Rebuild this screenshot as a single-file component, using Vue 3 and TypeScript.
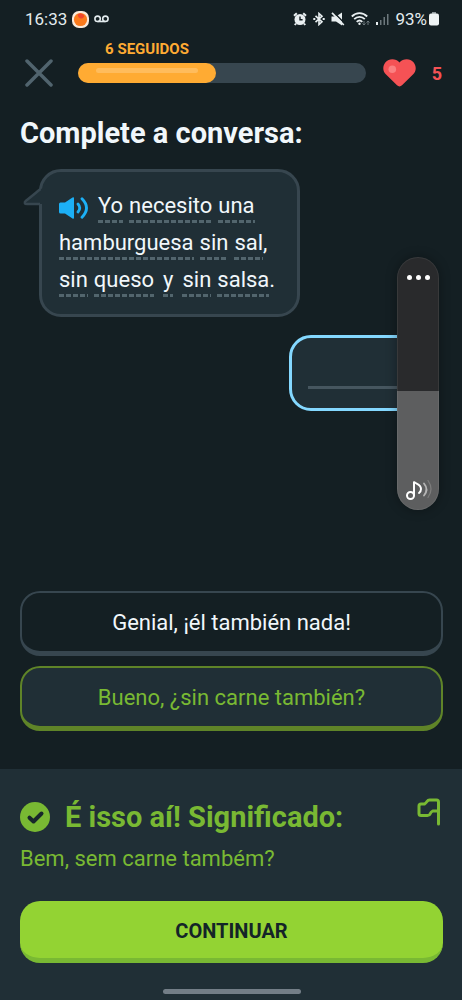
<script setup lang="ts">
import { computed, ref } from 'vue'

interface Token {
  text: string
  tail?: string
  wide?: boolean
}

const lines: Token[][] = [
  [{ text: 'Yo' }, { text: 'necesito' }, { text: 'una' }],
  [{ text: 'hamburguesa' }, { text: 'sin' }, { text: 'sal', tail: ',' }],
  [{ text: 'sin' }, { text: 'queso' }, { text: 'y', wide: true }, { text: 'sin' }, { text: 'salsa', tail: '.' }],
]

const options: string[] = ['Genial, ¡él también nada!', 'Bueno, ¿sin carne también?']
const selected = ref(1)
const progress = ref(48)
const hearts = ref(5)
const volume = ref(47)
const volumeStyle = computed(() => ({ '--level': `${volume.value}%` }))
</script>

<template>
  <div class="screen">
    <div class="status">
      <div class="status-group">
        <span class="clock">16:33</span>
        <svg class="app-dot" width="17" height="17" viewBox="0 0 17 17" aria-hidden="true">
          <rect x="0" y="0" width="17" height="17" rx="7" fill="#fbe9da" />
          <circle cx="8.5" cy="8.5" r="6.6" fill="#fb7a1c" />
          <path d="M6 3.2c2-1.4 5.5-.6 6.300 2-1 2.200-3 3-4.800 1.800C6.200 6.100 5.500 4.600 6 3.200z" fill="#f0452c" />
        </svg>
        <svg width="15" height="8" viewBox="0 0 15 8" fill="none" stroke="#e3ebee" stroke-width="1.600" aria-hidden="true">
          <circle cx="3.600" cy="3.800" r="2.700" />
          <circle cx="11.400" cy="3.800" r="2.700" />
          <path d="M3.600 6.500h7.800" />
        </svg>
      </div>
      <div class="status-group icons">
        <svg width="14" height="14" viewBox="0 0 14 14" aria-hidden="true">
          <circle cx="7" cy="7.500" r="5.500" fill="#e9eff1" />
          <path d="M1 3.800 3.800 1.200M13 3.800 10.200 1.200M3 11.500 1.800 13M11 11.500 12.200 13" stroke="#e9eff1" stroke-width="2" />
          <path d="M7 4.500v3.300h2.600" fill="none" stroke="#141f23" stroke-width="1.400" />
        </svg>
        <svg width="12" height="14" viewBox="0 0 12 14" fill="none" stroke="#e9eff1" stroke-width="1.600" aria-hidden="true">
          <path d="M2.500 3.800 9 9.800 6 12.500v-11L9 4.200 2.500 10.200" />
          <path d="M.3 7h2M9.700 7h2" stroke-width="2" />
        </svg>
        <svg width="14" height="14" viewBox="0 0 14 14" aria-hidden="true">
          <path d="M.5 4.500H5L11 .5v13l-6-4H.5z" fill="#e9eff1" />
          <path d="M2.500 0 14 11.800" stroke="#141f23" stroke-width="1.400" />
          <path d="M1 .8 12.800 13" stroke="#e9eff1" stroke-width="1.700" />
        </svg>
        <svg width="19" height="14" viewBox="0 0 19 14" fill="none" stroke="#e9eff1" stroke-width="1.800" aria-hidden="true">
          <path d="M.8 4.500c4.400-4.400 11-4.400 15.400 0M3.200 7.200c3-3 7.600-3 10.600 0M5.700 9.800c1.700-1.600 4-1.600 5.600 0" />
          <circle cx="8.500" cy="11.800" r="1.200" fill="#e9eff1" stroke="none" />
          <path d="M13 9v4m-1.500-1.500L13 13l1.500-1.500M17 13V9m-1.500 1.500L17 9l1.500 1.500" stroke="#6d787d" stroke-width="1" />
        </svg>
        <svg width="13" height="13" viewBox="0 0 13 13" aria-hidden="true">
          <rect x="0" y="9" width="2" height="3" fill="#e9eff1" />
          <path d="M4 7h1.500v5H4zM7.500 4H9v8H7.500zM11 1h1.500v11H11z" fill="#6d787d" />
        </svg>
        <span class="battery-text">93%</span>
        <svg width="10" height="14" viewBox="0 0 10 14" aria-hidden="true">
          <rect x="3" y="0" width="4" height="3" fill="#8d979b" />
          <rect x="0" y="1.500" width="10" height="12" rx="2" fill="#eef3f4" />
        </svg>
      </div>
    </div>

    <header class="top">
      <button class="close" type="button" aria-label="Fechar">
        <svg width="28" height="28" viewBox="0 0 28 28" aria-hidden="true">
          <path d="M2 2 26 26M26 2 2 26" stroke="#51646e" stroke-width="3.500" stroke-linecap="round" />
        </svg>
      </button>
      <div class="progress">
        <div class="track">
          <div class="fill" :style="{ width: progress + '%' }">
            <span class="streak">6 SEGUIDOS</span>
            <span class="shine"></span>
          </div>
        </div>
      </div>
      <div class="lives">
        <svg width="33" height="28" viewBox="0 0 33 28" aria-hidden="true">
          <path d="M16.500 3.500C13-.7 6-.9 2.500 3.200-.6 7-.4 12 2.800 15.200L14 26.300c1.500 1.500 3.500 1.500 5 0l11.200-11.100c3.200-3.200 3.400-8.200.3-12C27-.9 20-.7 16.500 3.500z" fill="#f55255" />
          <circle cx="9.300" cy="10.300" r="3.800" fill="#fb8081" />
        </svg>
        <span>{{ hearts }}</span>
      </div>
    </header>

    <main class="lesson">
      <h1>Complete a conversa:</h1>

      <div class="bubble">
        <svg class="tail" width="20" height="18" viewBox="0 0 20 18" aria-hidden="true">
          <path d="M20 0 17 1.500Q14 4 3 12.800C1 14.500 1.500 16 4 16H20z" fill="#202f36" />
          <path d="M17.500 1Q14 4 3 12.800C1 14.500 1.500 16 4 16H17" fill="none" stroke="#37464f" stroke-width="2.500" />
        </svg>
        <p v-for="(line, i) in lines" :key="i" class="line">
          <button v-if="i === 0" class="speak" type="button" aria-label="Ouvir">
            <svg width="30" height="24" viewBox="0 0 30 24" aria-hidden="true">
              <path d="M1.500 6.500H6L13.500 1.400Q15 .6 15 2.200V21.800Q15 23.400 13.500 22.600L6 17.500H1.500Q0 17.500 0 16V8Q0 6.500 1.500 6.500z" fill="#1cb0f6" />
              <path d="M19 8Q22.500 12 19 16M23 2.800Q32 12 23 21.200" fill="none" stroke="#1cb0f6" stroke-width="2.800" stroke-linecap="round" />
            </svg>
          </button>
          <span v-for="(t, j) in line" :key="j" class="token" :class="{ wide: t.wide }"><span class="hint">{{ t.text }}</span>{{ t.tail }}</span>
        </p>
      </div>

      <div class="answer"><span class="blank"></span></div>

      <div class="options">
        <button
          v-for="(option, i) in options"
          :key="option"
          type="button"
          class="option"
          :class="{ correct: i === selected }"
          :aria-pressed="i === selected"
          @click="selected = i"
        >
          {{ option }}
        </button>
      </div>
    </main>

    <footer class="result">
      <div class="result-head">
        <svg width="30" height="30" viewBox="0 0 30 30" aria-hidden="true">
          <circle cx="15" cy="15" r="15" fill="#79b933" />
          <path d="m9.500 15.700 4 3.800 8-8" fill="none" stroke="#18272b" stroke-width="4" stroke-linecap="round" stroke-linejoin="round" />
        </svg>
        <h2>É isso aí! Significado:</h2>
        <button class="flag" type="button" aria-label="Denunciar">
          <svg width="24" height="28" viewBox="0 0 24 28" fill="none" stroke="#79b933" stroke-width="3" stroke-linecap="round" stroke-linejoin="round" aria-hidden="true">
            <path d="M21.500 26V4Q21.500 2 19.500 2H12.500Q11 2 10 3.500T7.500 6H4Q2 6 2 8V15.500Q2 17.500 4 17.500H10.500Q12.500 17.500 13.200 15.700T15.700 13H21" />
          </svg>
        </button>
      </div>
      <p class="meaning">Bem, sem carne também?</p>
      <button class="continue" type="button">CONTINUAR</button>
      <div class="home"></div>
    </footer>

    <div class="volume">
      <button class="more" type="button" aria-label="Mais opções"><i></i><i></i><i></i></button>
      <input v-model.number="volume" class="slider" :style="volumeStyle" type="range" min="0" max="100" aria-label="Volume" />
      <svg class="note" width="26" height="22" viewBox="0 0 26 22" fill="none" stroke="#fff" stroke-width="2" stroke-linecap="round" aria-hidden="true">
        <circle cx="4.500" cy="15.500" r="3.500" />
        <path d="M8 15.500V1.500C9 4 15 3.500 15 9q0 2.500-2 4" />
        <path d="M18 3.500q5 6 0 12" stroke="#b5b5b5" stroke-width="1.800" />
        <path d="M22 .5q6 8.500 0 17" stroke="#7c7c7c" stroke-width="1.300" />
      </svg>
    </div>
  </div>
</template>

<style>
body {
  margin: 0;
  background: #141f23;
}
</style>

<style scoped>
.screen {
  position: relative;
  box-sizing: border-box;
  min-height: 100vh;
  display: flex;
  flex-direction: column;
  background: #141f23;
  color: #f1f7fb;
  font-family: Roboto, "Noto Sans", sans-serif;
}

button {
  font: inherit;
  color: inherit;
  background: none;
  border: 0;
  padding: 0;
  cursor: pointer;
}

svg {
  display: block;
  flex: none;
}

.status {
  display: flex;
  justify-content: space-between;
  align-items: center;
  height: 38px;
  padding: 0 23px 0 25px;
  font-size: 17px;
  color: #e3ebee;
}

.status-group {
  display: flex;
  align-items: center;
  gap: 5px;
}

.icons {
  gap: 6px;
}

.battery-text {
  margin-right: -4px;
}

.top {
  display: flex;
  align-items: center;
  margin-top: 16px;
  padding: 0 20px 0 25px;
  height: 38px;
}

.progress {
  flex: 1;
  margin: 0 17px 0 25px;
}

.track {
  height: 20px;
  border-radius: 10px;
  background: #37464f;
}

.fill {
  position: relative;
  height: 20px;
  border-radius: 10px;
  background: #ffab33;
}

.streak {
  position: absolute;
  left: 0;
  right: 0;
  bottom: 25px;
  text-align: center;
  font-size: 15px;
  line-height: 18px;
  font-weight: 700;
  color: #ffab33;
}

.shine {
  position: absolute;
  left: 18px;
  right: 18px;
  top: 5px;
  height: 5px;
  border-radius: 3px;
  background: #ffbc5c;
}

.lives {
  display: flex;
  align-items: center;
  gap: 16px;
  color: #f55255;
  font-size: 18px;
  font-weight: 700;
}

.lesson {
  flex: 1;
  display: flex;
  flex-direction: column;
  padding: 0 19px 38px 20px;
}

h1 {
  margin: 21px 0 0;
  font-size: 29px;
  line-height: 40px;
  font-weight: 700;
}

.bubble {
  position: relative;
  align-self: flex-start;
  box-sizing: border-box;
  min-width: 261px;
  margin: 16px 0 0 19px;
  padding: 17px 16px 14px 17px;
  border: 3px solid #37464f;
  border-radius: 22px;
  background: #202f36;
}

.tail {
  position: absolute;
  left: -19px;
  top: 16px;
}

.line {
  display: flex;
  align-items: center;
  gap: 6px;
  height: 37px;
  margin: 0;
  font-size: 22px;
  line-height: 28px;
}

.speak {
  margin-right: 3px;
}

.wide {
  padding: 0 3px;
}

.hint {
  display: inline-block;
  padding-bottom: 3px;
  background: repeating-linear-gradient(90deg, #52656d 0 5px, transparent 5px 7px) left bottom / 100% 3px no-repeat;
}

.answer {
  align-self: flex-end;
  box-sizing: border-box;
  width: 140px;
  height: 76px;
  margin: 18px 14px 0 0;
  padding: 48px 0 0 16px;
  border: 3px solid #84d8ff;
  border-radius: 22px;
  background: #202f36;
}

.blank {
  display: block;
  height: 3px;
  background: #46565f;
}

.options {
  display: flex;
  flex-direction: column;
  gap: 10px;
  margin-top: auto;
}

.option {
  height: 65px;
  padding-top: 2px;
  border: 2px solid #37464f;
  border-bottom-width: 5px;
  border-radius: 20px;
  font-size: 22px;
  line-height: 28px;
}

.option.correct {
  border-color: #5f8428;
  background: #202f36;
  color: #79b933;
}

.result {
  padding: 28px 19px 6px 20px;
  background: #202f36;
  color: #79b933;
}

.result-head {
  display: flex;
  align-items: center;
  gap: 15px;
  height: 40px;
}

h2 {
  margin: 0;
  font-size: 29px;
  line-height: 40px;
  font-weight: 700;
}

.flag {
  align-self: flex-start;
  margin-left: auto;
  padding: 1px 2px 0 0;
}

.meaning {
  margin: 8px 0 28px;
  font-size: 22px;
  line-height: 28px;
}

.continue {
  display: block;
  width: 100%;
  height: 62px;
  padding-top: 2px;
  border-bottom: 5px solid #79b933;
  border-radius: 20px;
  background: #93d333;
  color: #142428;
  font-size: 20px;
  font-weight: 700;
}

.home {
  width: 138px;
  height: 5px;
  margin: 26px auto 0;
  border-radius: 3px;
  background: #737e87;
}

.volume {
  position: absolute;
  top: 257px;
  right: 23px;
  width: 42px;
  height: 253px;
  border-radius: 21px;
  box-shadow: 0 0 12px #0005;
}

.slider {
  appearance: none;
  writing-mode: vertical-lr;
  direction: rtl;
  width: 100%;
  height: 100%;
  margin: 0;
  border-radius: 21px;
  box-shadow: inset 0 0 0 1px #ffffff12;
  background: linear-gradient(to top, #5d5e5f var(--level), #292a2c var(--level));
}

.slider::-webkit-slider-thumb {
  appearance: none;
  width: 42px;
  height: 1px;
}

.more {
  position: absolute;
  top: 18px;
  left: 10px;
  display: flex;
  gap: 4px;
}

.more i {
  width: 5px;
  height: 5px;
  border-radius: 50%;
  background: #fff;
}

.note {
  position: absolute;
  bottom: 8px;
  left: 9px;
  pointer-events: none;
}
</style>
